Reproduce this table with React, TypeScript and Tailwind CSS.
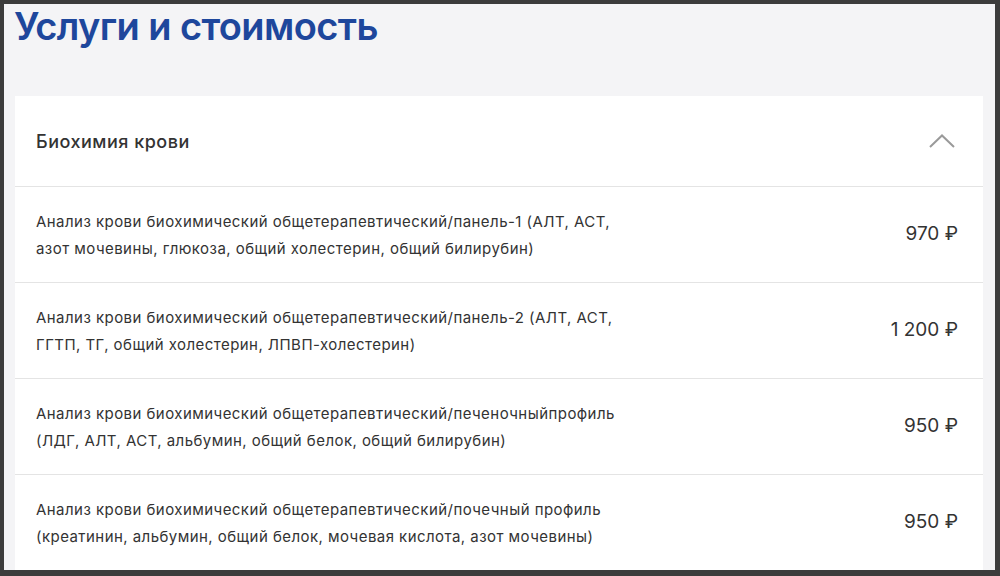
import React from "react";

const rows = [
  {
    l1: "Анализ крови биохимический общетерапевтический/панель-1 (АЛТ, АСТ,",
    l2: "азот мочевины, глюкоза, общий холестерин, общий билирубин)",
    price: "970 ₽",
  },
  {
    l1: "Анализ крови биохимический общетерапевтический/панель-2 (АЛТ, АСТ,",
    l2: "ГГТП, ТГ, общий холестерин, ЛПВП-холестерин)",
    price: "1 200 ₽",
  },
  {
    l1: "Анализ крови биохимический общетерапевтический/печеночныйпрофиль",
    l2: "(ЛДГ, АЛТ, АСТ, альбумин, общий белок, общий билирубин)",
    price: "950 ₽",
  },
  {
    l1: "Анализ крови биохимический общетерапевтический/почечный профиль",
    l2: "(креатинин, альбумин, общий белок, мочевая кислота, азот мочевины)",
    price: "950 ₽",
  },
];

export default function App() {
  return (
    <div
      className="w-[1000px] h-[576px] bg-[#3c3c3c] pt-[4px] pl-[4px] pr-[5px] pb-[6px]"
      style={{ fontFamily: "Inter, 'Noto Sans', sans-serif" }}
    >
      <div className="w-full h-full bg-[#f4f4f6] overflow-hidden pl-[10px] pr-[12px] pt-[3px]">
        <h1 className="text-[38px] leading-[38px] font-semibold text-[#1e479c] tracking-[-0.6px]">
          Услуги и стоимость
        </h1>
        <div className="mt-[51px] ml-[1px] bg-white">
          <div className="h-[91px] flex items-center justify-between pl-[21px] pr-[28px] border-b border-[#e4e4e4]">
            <span className="text-[18px] font-medium text-[#333333] tracking-[0.5px]">Биохимия крови</span>
            <svg width="26" height="14" viewBox="0 0 26 14" fill="none">
              <path d="M1 13 L13 1.5 L25 13" stroke="#9a9a9a" strokeWidth="2" />
            </svg>
          </div>
          {rows.map((r, i) => (
            <div
              key={i}
              className="h-[96px] flex items-center justify-between pl-[21px] pr-[25px] border-b border-[#e4e4e4]"
            >
              <div className="text-[15px] leading-[27px] text-[#333333] tracking-[0.45px]">
                <div>{r.l1}</div>
                <div>{r.l2}</div>
              </div>
              <div className="text-[19px] text-[#333333] whitespace-nowrap">{r.price}</div>
            </div>
          ))}
        </div>
      </div>
    </div>
  );
}
